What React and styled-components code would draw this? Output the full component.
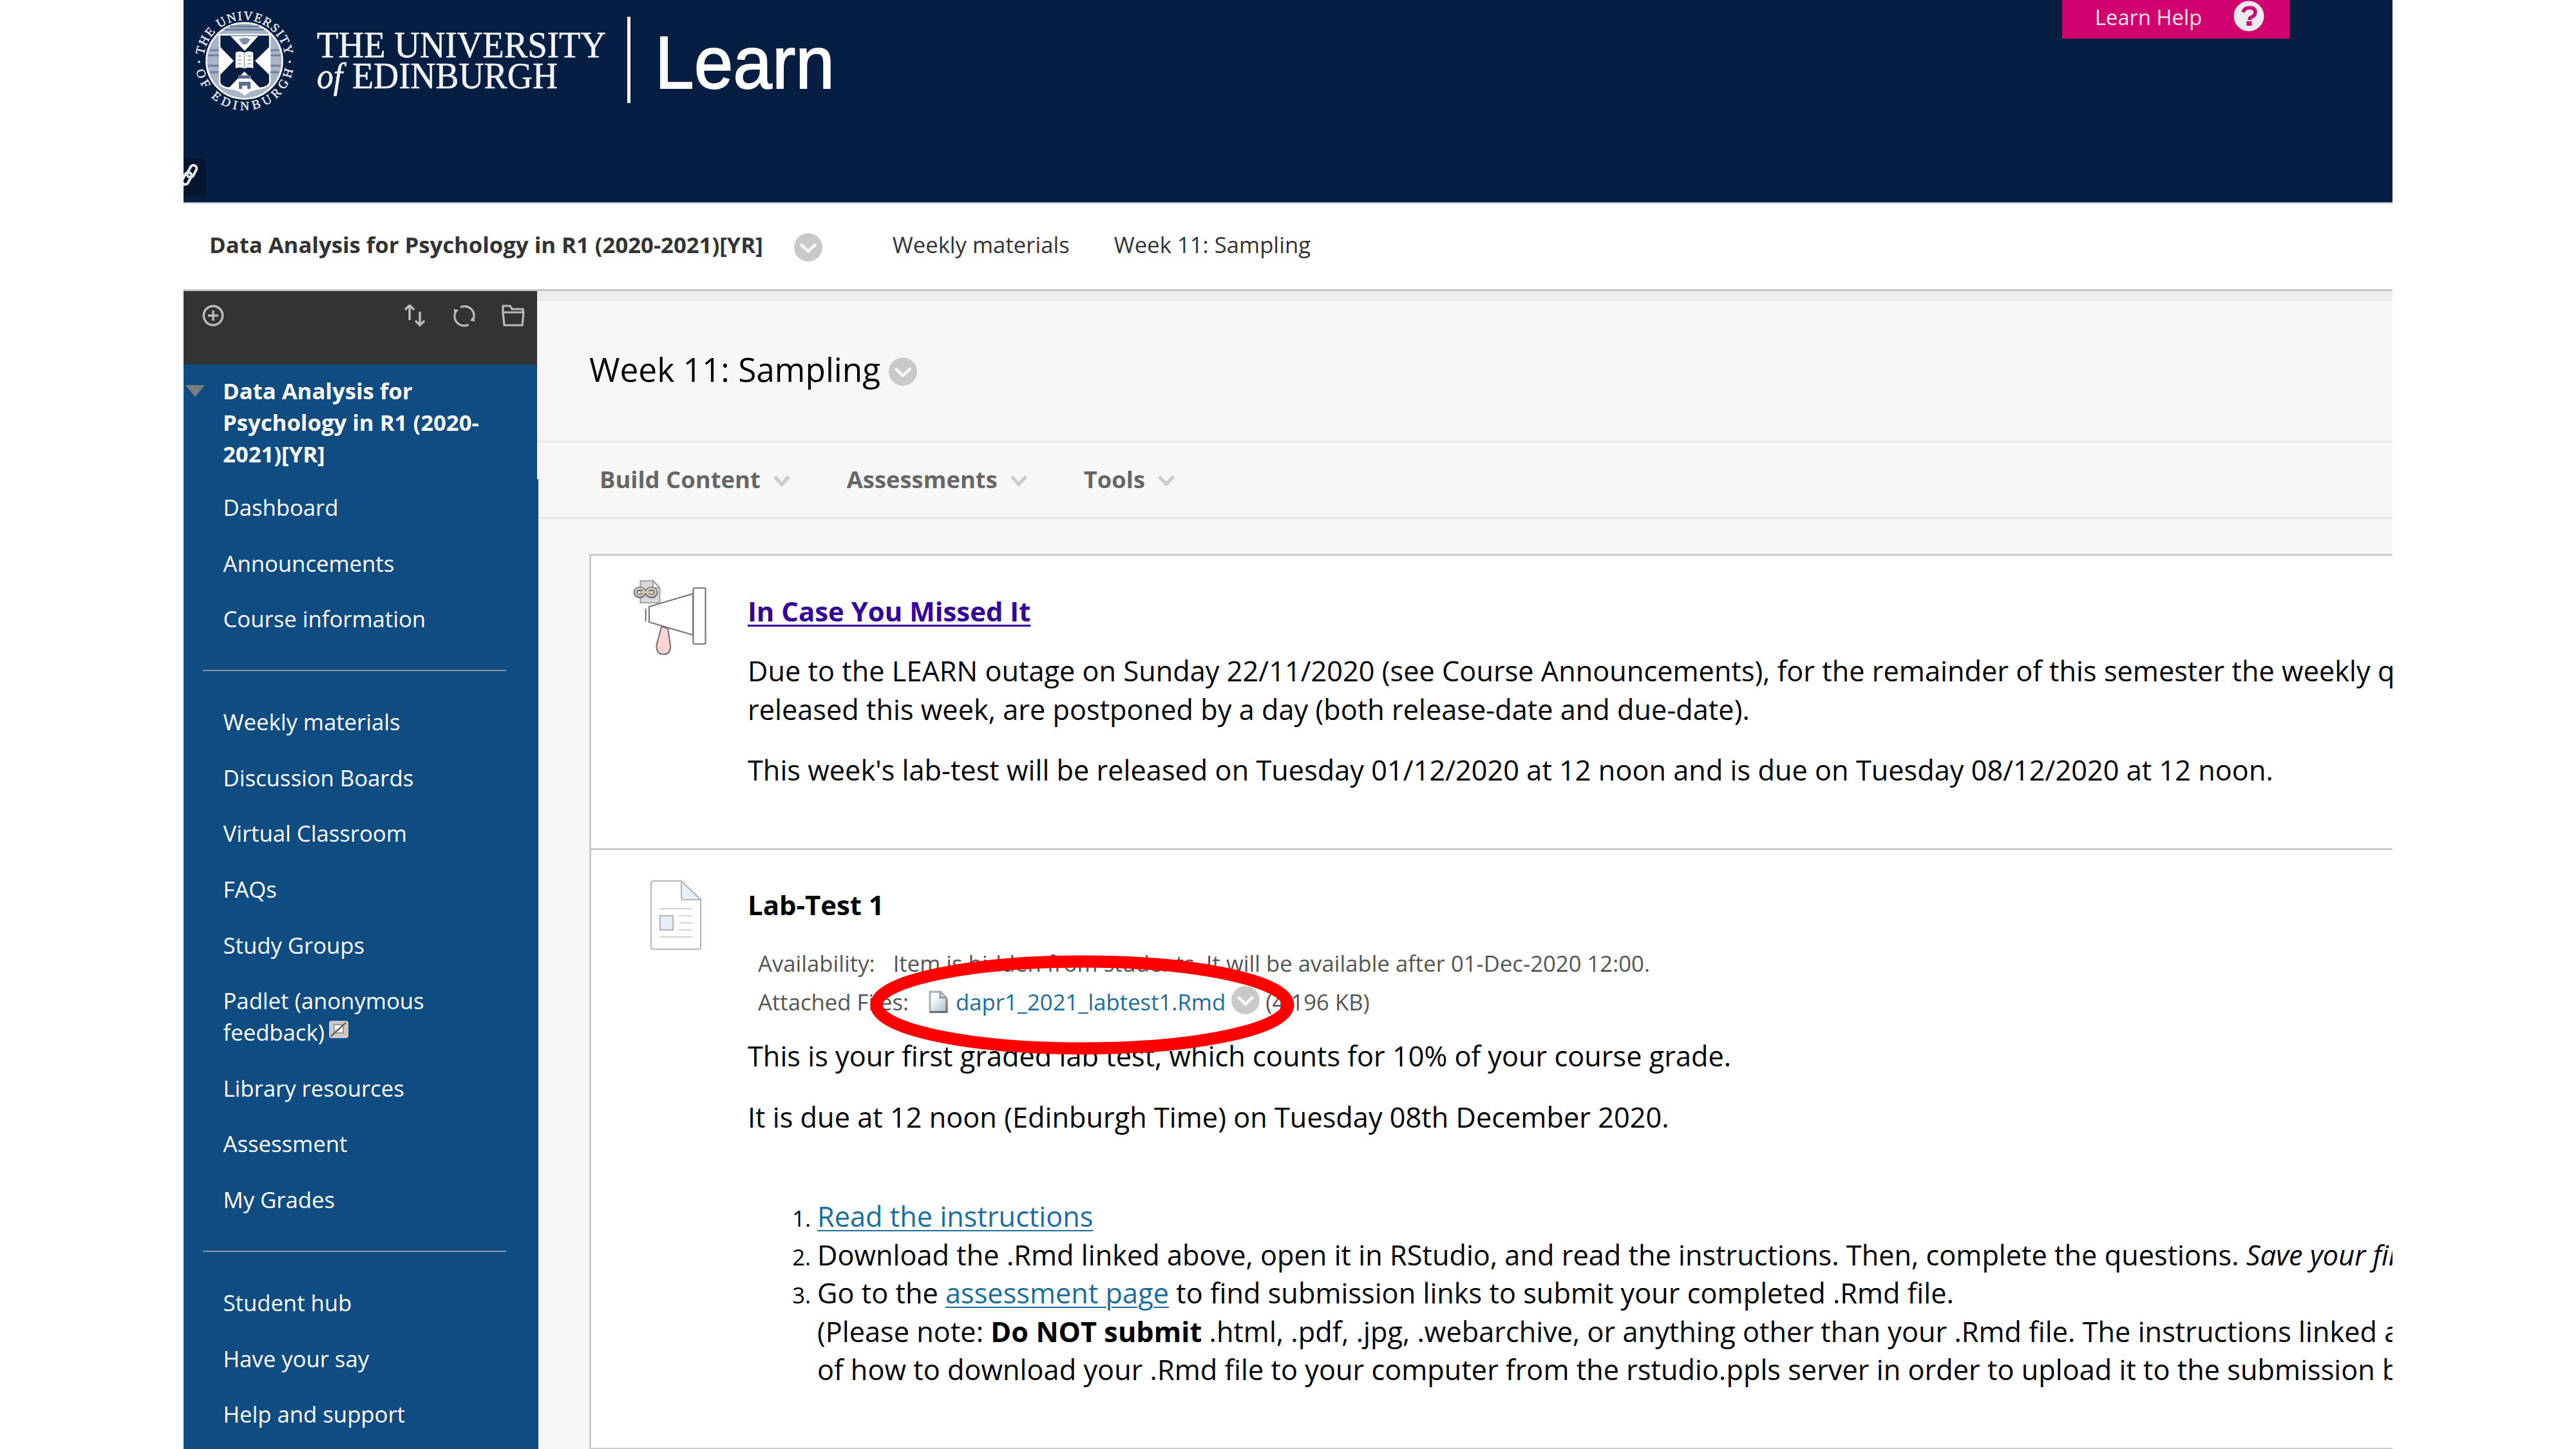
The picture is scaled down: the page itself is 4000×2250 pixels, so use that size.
import React from 'react';
import styled, { createGlobalStyle } from 'styled-components';

const Global = createGlobalStyle`
  *{box-sizing:border-box}
  html,body{margin:0;padding:0;background:#fff}
  body{width:4000px;height:2250px;overflow:hidden;font-family:"Open Sans","Noto Sans",sans-serif;color:#000}
  ul,ol,p,h1,h2,h3{margin:0;padding:0;list-style:none;font-weight:400}
  svg{display:block;flex:none}
`;

const Page = styled.div`width:3430px;height:2250px;margin-left:285px;overflow:hidden;position:relative;display:flex;flex-direction:column;background:#f7f7f7;`;
const Header = styled.header`height:316px;flex:none;background:#051e42;border-bottom:2px solid #b9c0cc;position:relative;display:flex;justify-content:space-between;align-items:flex-start;`;
const HelpTab = styled.a`height:60px;width:353px;margin-right:160px;background:#d0006f;color:#fbe3ef;display:flex;align-items:flex-start;padding-left:51px;font-size:32.7px;line-height:53px;white-space:nowrap;`;
const HelpText = styled.span`width:215px;`;
const HelpIcon = styled.svg`margin-top:1px;`;
const LinkBadge = styled.div`position:absolute;left:0;top:246px;width:35px;height:58px;background:#041530;border-radius:0 8px 0 0;`;

const Crumbs = styled.nav`height:136px;flex:none;background:#fff;border-bottom:3px solid #c6c6c6;display:flex;align-items:center;padding:0 0 5px 40px;font-size:34.7px;color:#333;white-space:nowrap;`;
const Crumb = styled.span`font-weight:${p => (p.$bold ? 700 : 400)};margin-left:${p => p.$gap || 0}px;line-height:48px;`;
const CrumbMenu = styled.span`margin:7px 0 0 48px;`;

const Body = styled.div`flex:1;display:flex;min-height:0;`;
const Sidebar = styled.aside`width:549px;flex:none;display:flex;flex-direction:column;position:relative;z-index:1;`;
const Tools = styled.div`height:114px;width:549px;flex:none;background:#333;display:flex;align-items:flex-start;padding:21px 19px 0 28px;`;
const Spacer = styled.span`flex:1;`;
const ToolIcon = styled.svg`margin-left:${p => p.$gap || 0}px;`;
const Menu = styled.div`flex:1;width:551px;background:#0f4c81;padding-top:16px;color:#fff;font-size:34.7px;clip-path:polygon(0 0,549px 0,549px 178px,551px 178px,551px 100%,0 100%);`;
const CourseName = styled.h3`font-weight:700;font-size:34.7px;line-height:49px;padding-left:61px;position:relative;margin-bottom:34px;white-space:nowrap;`;
const Triangle = styled.svg`position:absolute;left:3px;top:16px;`;
const Item = styled.li`padding-left:61.5px;line-height:49px;margin-bottom:37.6px;white-space:nowrap;`;
const InlineIcon = styled.svg`display:inline-block;vertical-align:-1px;margin:0 0 5px 7px;`;
const Rule = styled.div`height:2px;background:#8b93a5;width:471px;margin:55px 0 54px 30px;`;

const Main = styled.main`flex:1;min-width:0;border-top:16px solid #ededed;display:flex;flex-direction:column;`;
const TitleBar = styled.div`height:219px;flex:none;border-bottom:3px solid #e8e8e8;padding:69px 0 0 81px;display:flex;align-items:flex-start;gap:13px;`;
const PageTitle = styled.h1`font-size:51.4px;line-height:72px;white-space:nowrap;`;
const TitleMenu = styled.span`margin-top:18px;`;
const ActionBar = styled.div`height:119px;flex:none;border-bottom:3px solid #e8e8e8;padding:0 0 3px 97px;display:flex;align-items:center;gap:88px;`;
const Action = styled.span`display:flex;align-items:center;gap:20px;font-weight:700;font-size:36.4px;color:#666;white-space:nowrap;`;
const Chevron = styled.svg`margin-top:6px;`;

const Card = styled.section`margin:54px 0 0 81px;width:3000px;height:1391px;flex:none;background:#fff;border:3px solid #ccc;display:flex;flex-direction:column;`;
const Entry = styled.article`display:flex;height:${p => p.$h}px;border-bottom:${p => (p.$line ? '3px solid #ccc' : '0')};`;
const IconCol = styled.div`width:243px;flex:none;padding:${p => p.$pad};`;
const Content = styled.div`font-size:43.3px;line-height:59.5px;white-space:nowrap;padding-top:${p => p.$top}px;`;
const EntryTitle = styled.h2`font-weight:700;font-size:41.9px;line-height:60px;`;
const Anchor = styled.a`color:${p => p.$color || '#1a6e9e'};text-decoration:${p => (p.$plain ? 'none' : 'underline')};text-decoration-thickness:${p => p.$thick || 2}px;text-underline-offset:5px;`;
const Para = styled.p`margin-top:${p => p.$gap}px;`;
const Details = styled.div`margin:${p => p.$gap}px 0 0 16px;height:60px;font-size:34.7px;color:#555;display:flex;align-items:center;`;
const Label = styled.span`margin-right:${p => p.$gap}px;`;
const FileName = styled.span`margin:0 9px 0 12px;`;
const Lifted = styled.span`margin:-6px 9px 0 0;`;
const Steps = styled.ol`margin-top:95px;`;
const Step = styled.li`display:flex;align-items:baseline;`;
const Num = styled.span`width:98px;text-align:right;margin-right:10px;font-size:34.6px;line-height:40px;`;
const Strong = styled.b`font-weight:700;`;
const Em = styled.em`font-style:italic;`;
const Ring = styled.svg`position:absolute;left:1065px;top:1482px;`;

const Circle = () => (
  <svg width="44" height="44" viewBox="0 0 44 44"><circle cx="22" cy="22" r="22" fill="#c9c9c9" /><path d="M10 17l12 11 12-11" fill="none" stroke="#f5f5f5" strokeWidth="5" /></svg>
);
const Down = () => <Chevron width="26" height="20" viewBox="0 0 26 20"><path d="M2 3l11 12L24 3" fill="none" stroke="#ccc" strokeWidth="5.5" /></Chevron>;

const Logo = () => (
  <svg width="1100" height="200" viewBox="0 0 1100 200" fill="#fff">
    <defs>
      <path id="ringTop" d="M31 94.500a63.500 63.500 0 0 1 127 0" />
      <path id="ringBottom" d="M18 94.500a76.500 76.500 0 0 0 153 0" />
    </defs>
    <g fontFamily="Liberation Serif, serif" fontSize="19.500" fill="#e6eaf1" stroke="#e6eaf1" strokeWidth=".5">
      <text><textPath href="#ringTop" startOffset="9" textLength="181" lengthAdjust="spacing">THE UNIVERSITY</textPath></text>
      <text><textPath href="#ringBottom" startOffset="15" textLength="211" lengthAdjust="spacing">OF EDINBURGH</textPath></text>
    </g>
    <circle cx="24" cy="96" r="1.800" /><circle cx="165" cy="96" r="1.800" />
    <circle cx="94.500" cy="94.500" r="59" fill="#a9b4c7" stroke="#fff" strokeWidth="2.500" />
    <path d="M41 78h14M38 86h17M38 102h17M41 112h14M134 78h14M134 86h17M134 102h17M134 112h14M64 46h61M72 41h45" stroke="#6d7f9d" strokeWidth="3" />
    <path d="M56 54H134V128Q132 136 118 137Q104 138 95 147Q86 138 72 137Q58 136 56 128Z" fill="#051e42" stroke="#fff" strokeWidth="2.500" />
    <path d="M73 56H116L95 79ZM57 73L78 94.500L57 116ZM133 73L111 94.500L133 116ZM94.500 111L120 138Q104 140 95 148Q86 140 69 138Z" />
    <path d="M86 61q9-5 18 0l-6 8h-6z" fill="#8291ab" />
    <path d="M85 122v-5h20v5zM86 127h18v11h-5v-5h-8v5h-5z" fill="#5c6d8c" />
    <path d="M80 81q7-4 14.500 0q7-4 14.500 0v26q-7-3-14.500 0q-7-3-14.500 0z" stroke="#051e42" strokeWidth="1.500" />
    <path d="M94.500 81v26M84 87h6M84 93h6M84 99h6M99 87h6M99 93h6M99 99h6" stroke="#8f9db5" strokeWidth="1.500" />
    <g fontFamily="Liberation Serif, serif" fontSize="58" fill="#f2f4f8" stroke="#f2f4f8" strokeWidth=".6">
      <text x="207" y="88.500" textLength="449" lengthAdjust="spacingAndGlyphs">THE UNIVERSITY</text>
      <text x="207" y="137" fontStyle="italic" textLength="40" lengthAdjust="spacingAndGlyphs">of</text>
      <text x="262" y="137" textLength="319" lengthAdjust="spacingAndGlyphs">EDINBURGH</text>
    </g>
    <rect x="689" y="26" width="5" height="134" />
    <text x="732" y="136.500" fontFamily="Liberation Sans, sans-serif" fontSize="115" textLength="279" stroke="#fff" strokeWidth="1.800" lengthAdjust="spacingAndGlyphs">Learn</text>
  </svg>
);

const Megaphone = () => (
  <svg width="120" height="120" viewBox="0 0 120 120" stroke="#777" strokeWidth="2.200">
    <path d="M28 44L96 24V88L28 68z" fill="#fff" />
    <path d="M22.700 47v20" />
    <path d="M47 75L39.500 104q-.5 14 11 14t10.500-14L57 78z" fill="#ffd3d3" />
    <rect x="96.500" y="15" width="19" height="87" rx="2" fill="#fff" />
    <path d="M14.500 4h20l10 11v23h-30z" fill="#d9d9d9" stroke="#a5a5a5" />
    <path d="M34 4v11h10z" fill="#fff" stroke="#a5a5a5" />
    <g fill="none" stroke="#77728a" strokeWidth="7"><rect x="7" y="16.500" width="13" height="11" rx="5.500" /><rect x="25" y="16.500" width="13" height="11" rx="5.500" /></g>
    <g fill="none" stroke="#d3cba8" strokeWidth="3"><rect x="7" y="16" width="13" height="11" rx="5.500" /><rect x="25" y="16" width="13" height="11" rx="5.500" /><path d="M15 21.500h15" /></g>
  </svg>
);

const Doc = () => (
  <svg width="80" height="110" viewBox="0 0 80 110" fill="none" stroke="#b5b8ba" strokeWidth="2.200">
    <path d="M5 1h43l30 29v73q0 4-4 4H5q-4 0-4-4V5q0-4 4-4z" fill="#fff" />
    <path d="M48 1v26q0 3 4 3h26z" fill="#e6effa" />
    <path d="M14 44h51M44 55h21M44 66h21M44 77h21M14 88h51" stroke="#d3d5d7" />
    <rect x="15" y="55" width="20" height="22" fill="#e6effa" />
  </svg>
);

const FileIcon = () => (
  <svg width="30" height="38" viewBox="0 0 30 38">
    <defs>
      <linearGradient id="fileFill" x1="0" y1="0" x2="1" y2="1"><stop offset=".3" stopColor="#f5fafc" /><stop offset="1" stopColor="#a9bcc8" /></linearGradient>
      <linearGradient id="fileEdge" x1="0" y1="0" x2="0" y2="1"><stop offset="0" stopColor="#a5a5a5" /><stop offset="1" stopColor="#666d72" /></linearGradient>
    </defs>
    <path d="M2 3h17l9 10v21H2z" fill="url(#fileFill)" stroke="#b0b0b0" strokeWidth="3" />
    <path d="M2 34.500h26V13M18 3v9h9" fill="none" stroke="url(#fileEdge)" strokeWidth="3" />
  </svg>
);

const Hidden = () => (
  <InlineIcon width="30" height="27" viewBox="0 0 30 27"><rect width="30" height="27" rx="4" fill="#cdc9c9" /><rect x="8" y="6" width="14" height="13" fill="#fff" stroke="#999" strokeWidth="2" /><path d="M3 24L26 3" stroke="#666" strokeWidth="2.500" /></InlineIcon>
);

const groups = [
  ['Dashboard', 'Announcements', 'Course information'],
  ['Weekly materials', 'Discussion Boards', 'Virtual Classroom', 'FAQs', 'Study Groups', 'Padlet', 'Library resources', 'Assessment', 'My Grades'],
  ['Student hub', 'Have your say', 'Help and support'],
];

export default function App() {
  return (
    <>
      <Global />
      <Page>
        <Header>
          <Logo />
          <HelpTab>
            <HelpText>Learn Help</HelpText>
            <HelpIcon width="48" height="48" viewBox="0 0 48 48"><circle cx="24" cy="24" r="23.5" fill="#ececec" /><path d="M15 18q2-7 10-7q9 0 9 7q0 5-5 7q-4 2-4 5" fill="none" stroke="#d0006f" strokeWidth="5.5" /><rect x="20.500" y="32" width="8" height="7" fill="#d0006f" /></HelpIcon>
          </HelpTab>
          <LinkBadge><svg width="26" height="50" viewBox="0 0 26 50" fill="none" stroke="#e8e8e8" strokeWidth="4"><rect x="8" y="10" width="10" height="20" rx="5" transform="rotate(28 13 20)" /><rect x="0" y="21" width="10" height="20" rx="5" transform="rotate(28 5 31)" /></svg></LinkBadge>
        </Header>
        <Crumbs>
          <Crumb $bold>Data Analysis for Psychology in R1 (2020-2021)[YR]</Crumb>
          <CrumbMenu><Circle /></CrumbMenu>
          <Crumb $gap={109}>Weekly materials</Crumb>
          <Crumb $gap={69}>Week 11: Sampling</Crumb>
        </Crumbs>
        <Body>
          <Sidebar>
            <Tools>
              <ToolIcon width="36" height="36" viewBox="0 0 36 36" fill="none" stroke="#bbb" strokeWidth="3.500"><circle cx="18" cy="17" r="14.700" /><path d="M18 9v16M10 17h16" /></ToolIcon>
              <Spacer />
              <ToolIcon width="36" height="38" viewBox="0 0 36 38" fill="none" stroke="#bbb" strokeWidth="3.500"><path d="M9 24V1M2 8l7-7 7 7M25 11v21M18 25l7 7 7-7" /></ToolIcon>
              <ToolIcon $gap={40} width="36" height="36" viewBox="0 0 36 36" fill="none" stroke="#bbb" strokeWidth="3.200"><path d="M4.500 11a14.800 14.800 0 0 0 20 20M12 4a14.800 14.800 0 0 1 19 21" /><path d="M1 7l8 1-5 7zM35 26l-8-1 4-6z" fill="#bbb" stroke="none" /></ToolIcon>
              <ToolIcon $gap={40} width="36" height="36" viewBox="0 0 36 36" fill="none" stroke="#bbb" strokeWidth="3.200"><path d="M2 11V2h11l3 5h17v4M2 12h32l-2 20H4z" /></ToolIcon>
            </Tools>
            <Menu>
              <CourseName><Triangle width="30" height="18" viewBox="0 0 30 18"><path d="M0 0h30L15 18z" fill="#7d7d7d" /></Triangle>Data Analysis for<br />Psychology in R1 (2020-<br />2021)[YR]</CourseName>
              {groups.map((g, i) => (
                <React.Fragment key={i}>
                  {i > 0 && <Rule />}
                  <ul>{g.map(t => <Item key={t}>{t === 'Padlet' ? <>Padlet (anonymous<br />feedback)<Hidden /></> : t}</Item>)}</ul>
                </React.Fragment>
              ))}
            </Menu>
          </Sidebar>
          <Main>
            <TitleBar><PageTitle>Week 11: Sampling</PageTitle><TitleMenu><Circle /></TitleMenu></TitleBar>
            <ActionBar>{['Build Content', 'Assessments', 'Tools'].map(t => <Action key={t}>{t}<Down /></Action>)}</ActionBar>
            <Card>
              <Entry $h={457} $line>
                <IconCol $pad="35px 0 0 62px"><Megaphone /></IconCol>
                <Content $top={56}>
                  <EntryTitle><Anchor $color="#330099" $thick={3}>In Case You Missed It</Anchor></EntryTitle>
                  <Para $gap={33}>Due to the LEARN outage on Sunday 22/11/2020 (see Course Announcements), for the remainder of this semester the weekly q<br />released this week, are postponed by a day (both release-date and due-date).</Para>
                  <Para $gap={35}>This week's lab-test will be released on Tuesday 01/12/2020 at 12 noon and is due on Tuesday 08/12/2020 at 12 noon.</Para>
                </Content>
              </Entry>
              <Entry $h={928}>
                <IconCol $pad="47px 0 0 92px"><Doc /></IconCol>
                <Content $top={55}>
                  <EntryTitle>Lab-Test 1</EntryTitle>
                  <Details $gap={31}><Label $gap={28}>Availability:</Label>Item is hidden from students. It will be available after 01-Dec-2020 12:00.</Details>
                  <Details $gap={0}><Label $gap={31}>Attached Files:</Label><FileIcon /><FileName><Anchor $plain>dapr1_2021_labtest1.Rmd</Anchor></FileName><Lifted><Circle /></Lifted>(4.196 KB)</Details>
                  <Para $gap={24}>This is your first graded lab test, which counts for 10% of your course grade.</Para>
                  <Para $gap={35}>It is due at 12 noon (Edinburgh Time) on Tuesday 08th December 2020.</Para>
                  <Steps>
                    <Step><Num>1.</Num><span><Anchor>Read the instructions</Anchor></span></Step>
                    <Step><Num>2.</Num><span>Download the .Rmd linked above, open it in RStudio, and read the instructions. Then, complete the questions. <Em>Save your fin</Em></span></Step>
                    <Step><Num>3.</Num><span>Go to the <Anchor>assessment page</Anchor> to find submission links to submit your completed .Rmd file.<br />(Please note: <Strong>Do NOT submit</Strong> .html, .pdf, .jpg, .webarchive, or anything other than your .Rmd file. The instructions linked a<br />of how to download your .Rmd file to your computer from the rstudio.ppls server in order to upload it to the submission b</span></Step>
                  </Steps>
                </Content>
              </Entry>
            </Card>
          </Main>
        </Body>
        <Ring width="662" height="158" viewBox="0 0 662 158"><ellipse cx="330.500" cy="78.500" rx="319.500" ry="67.500" fill="none" stroke="#fe0000" strokeWidth="19" /></Ring>
      </Page>
    </>
  );
}
